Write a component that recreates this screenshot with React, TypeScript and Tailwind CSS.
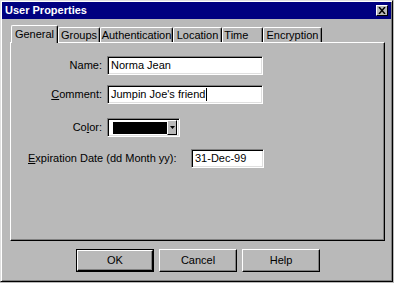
import React from "react";

const FONT = "font-['Liberation_Sans',Arial,sans-serif]";

const sunken =
  "border border-t-[#808080] border-l-[#808080] border-r-white border-b-white shadow-[inset_1px_1px_0_#000,inset_-1px_-1px_0_#dfdfdf] bg-white";

const tabs = ["General", "Groups", "Authentication", "Location", "Time    ", "Encryption"];
const tabWidths = [47, 42, 73, 49, 41, 59];

function Tab({ label, width, active }: { label: string; width: number; active?: boolean }) {
  return (
    <div
      style={{ width }}
      className={
        active
          ? "relative z-10 -mb-[1px] flex h-[18px] items-center justify-center rounded-t-[2px] border-l border-t border-r border-l-white border-t-white border-r-black bg-[#b9b9b9] shadow-[inset_-1px_0_0_#808080]"
          : "mt-[2px] flex h-[15px] items-center justify-center rounded-t-[2px] border-l border-t border-r border-l-white border-t-white border-r-black shadow-[inset_-1px_0_0_#808080]"
      }
    >
      <span className="whitespace-pre text-[11px] leading-none text-black">{label}</span>
    </div>
  );
}

function Button({ label, isDefault }: { label: string; isDefault?: boolean }) {
  return (
    <div
      className={
        isDefault
          ? "flex h-[23px] w-[78px] items-center justify-center border border-black"
          : "flex h-[23px] w-[78px] items-center justify-center"
      }
    >
      <div className="flex h-full w-full items-center justify-center border border-t-white border-l-white border-r-black border-b-black shadow-[inset_-1px_-1px_0_#808080]">
        <span className="text-[11px] leading-none text-black">{label}</span>
      </div>
    </div>
  );
}

export default function App() {
  return (
    <div className={`${FONT} h-[283px] w-[394px] bg-[#b9b9b9]`}>
      <div className="flex h-[282px] w-[393px] flex-col border border-t-[#dfdfdf] border-l-[#dfdfdf] border-r-black border-b-black shadow-[inset_1px_1px_0_#fff,inset_-1px_-1px_0_#808080]">
        {/* title bar */}
        <div className="mx-[1px] mt-[1px] flex h-[17px] items-center justify-between bg-[#000080] pl-[3px] pr-[3px]">
          <span className="text-[11px] font-bold leading-none text-white">User Properties</span>
          <div className="flex h-[11px] w-[12px] items-center justify-center border border-t-white border-l-white border-r-black border-b-black bg-[#b9b9b9]">
            <svg width="8" height="7" viewBox="0 0 8 7">
              <path d="M1 0 L7 7 M7 0 L1 7" stroke="#000" strokeWidth="1.5" />
            </svg>
          </div>
        </div>

        {/* tabs */}
        <div className="ml-[10px] mt-[6px] flex h-[17px] items-start">
          {tabs.map((t, i) => (
            <Tab key={t} label={t} width={tabWidths[i]} active={i === 0} />
          ))}
        </div>

        {/* panel */}
        <div className="ml-[9px] flex h-[199px] w-[375px] flex-col border border-t-white border-l-white border-r-black border-b-black shadow-[inset_-1px_-1px_0_#808080] pt-[13px]">
          <div className="flex items-center">
            <span className="w-[91px] text-right text-[11px] text-black">Name:</span>
            <div className={`${sunken} ml-[5px] flex h-[19px] w-[156px] items-center px-[3px]`}>
              <span className="text-[11px] leading-none text-black">Norma Jean</span>
            </div>
          </div>
          <div className="mt-[10px] flex items-center">
            <span className="w-[91px] text-right text-[11px] text-black">
              <span className="underline">C</span>omment:
            </span>
            <div className={`${sunken} ml-[5px] flex h-[19px] w-[156px] items-center px-[3px]`}>
              <span className="text-[11px] leading-none text-black">Jumpin Joe's friend</span>
              <span className="ml-[1px] h-[13px] w-[1px] bg-black" />
            </div>
          </div>
          <div className="mt-[14px] flex items-center">
            <span className="w-[91px] text-right text-[11px] text-black">
              Co<span className="underline">l</span>or:
            </span>
            <div className={`${sunken} ml-[5px] flex h-[19px] w-[73px] items-center pl-[5px] pr-[2px]`}>
              <div className="h-[12px] w-[54px] bg-black" />
              <div className="ml-auto flex h-[15px] w-[10px] items-center justify-center border border-t-white border-l-white border-r-black border-b-black bg-[#b9b9b9]">
                <svg width="5" height="3" viewBox="0 0 5 3">
                  <path d="M0 0 H5 L2.5 3 Z" fill="#000" />
                </svg>
              </div>
            </div>
          </div>
          <div className="mt-[12px] flex items-center">
            <span className="ml-[17px] w-[163px] text-[11px] text-black">
              <span className="underline">E</span>xpiration Date (dd Month yy):
            </span>
            <div className={`${sunken} flex h-[19px] w-[73px] items-center px-[3px]`}>
              <span className="text-[11px] leading-none text-black">31-Dec-99</span>
            </div>
          </div>
        </div>

        {/* buttons */}
        <div className="ml-[75px] mt-[8px] flex gap-[5px]">
          <Button label="OK" isDefault />
          <Button label="Cancel" />
          <Button label="Help" />
        </div>
      </div>
    </div>
  );
}
